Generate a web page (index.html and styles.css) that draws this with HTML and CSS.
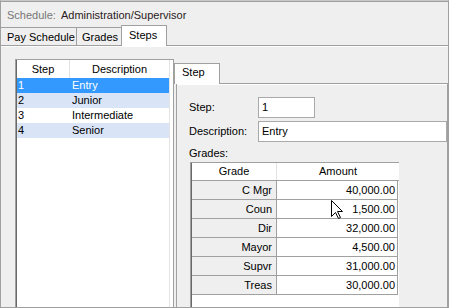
FILE: index.html
```html
<!DOCTYPE html>
<html>
<head>
<meta charset="utf-8">
<link rel="stylesheet" href="styles.css">
</head>
<body>
<div class="win">
  <div class="title"><span class="lbl">Schedule:</span><span class="val">Administration/Supervisor</span></div>
  <div class="tabs">
    <div class="tab tab-pay">Pay Schedule</div>
    <div class="tab tab-grades">Grades</div>
    <div class="tab tab-active">Steps</div>
  </div>
  <div class="page">
    <div class="list">
      <div class="ltable">
        <div class="lrow lhead"><div class="lc1">Step</div><div class="lc2">Description</div></div>
        <div class="lrow sel"><div class="lc1">1</div><div class="lc2">Entry</div></div>
        <div class="lrow alt"><div class="lc1">2</div><div class="lc2">Junior</div></div>
        <div class="lrow"><div class="lc1">3</div><div class="lc2">Intermediate</div></div>
        <div class="lrow alt"><div class="lc1">4</div><div class="lc2">Senior</div></div>
      </div>
    </div>
    <div class="detail">
      <div class="subtabs"><div class="subtab">Step</div></div>
      <div class="subbody">
        <div class="frow"><span class="flbl">Step:</span><div class="inp inp-step">1</div></div>
        <div class="frow"><span class="flbl">Description:</span><div class="inp inp-desc">Entry</div></div>
        <div class="glbl">Grades:</div>
        <div class="grid">
          <div class="ghead"><div class="gh1">Grade</div><div class="gh2">Amount</div></div>
          <div class="grow"><div class="gc1">C Mgr</div><div class="gc2">40,000.00</div></div>
          <div class="grow"><div class="gc1">Coun</div><div class="gc2">1,500.00</div></div>
          <div class="grow"><div class="gc1">Dir</div><div class="gc2">32,000.00</div></div>
          <div class="grow"><div class="gc1">Mayor</div><div class="gc2">4,500.00</div></div>
          <div class="grow"><div class="gc1">Supvr</div><div class="gc2">31,000.00</div></div>
          <div class="grow"><div class="gc1">Treas</div><div class="gc2">30,000.00</div></div>
        </div>
      </div>
    </div>
  </div>
  <svg class="cursor" width="13" height="20" viewBox="0 0 13 20"><path d="M0.5 0.5 L0.5 16.5 L4.5 12.5 L7.5 18.5 L9.5 17.5 L6.5 11.5 L11.5 11.5 Z" fill="#fff" stroke="#000" stroke-width="1" stroke-linejoin="miter"/></svg>
</div>
</body>
</html>
```

FILE: styles.css
```css
body {
  margin: 0;
  font-family: "Liberation Sans", Arial, sans-serif;
  font-size: 11px;
  line-height: 13px;
  color: #000;
  background: #fff;
}

.win {
  position: relative;
  width: 449px;
  height: 308px;
  box-sizing: border-box;
  border: 1px solid #a0a0a0;
  border-top-color: #c8c8c8;
  background: #efefef;
  display: flex;
  flex-direction: column;
  overflow: hidden;
}

.title {
  height: 24px;
  box-sizing: border-box;
  border-top: 1px solid #a0a0a0;
  padding: 3px 0 0 6px;
  display: flex;
  align-items: center;
  flex: none;
}

.lbl {
  width: 54px;
  color: #767676;
}

.val {
  color: #2a1a1a;
}

.tabs {
  height: 21px;
  box-sizing: border-box;
  border-bottom: 1px solid #a0a0a0;
  display: flex;
  align-items: flex-end;
  flex: none;
}

.tab {
  height: 18px;
  box-sizing: border-box;
  border-top: 1px solid #a0a0a0;
  border-left: 1px solid #a0a0a0;
  padding: 3px 0 0 5px;
  white-space: nowrap;
}

.tab-pay {
  width: 75px;
  border-left: none;
  padding-left: 6px;
}

.tab-grades {
  width: 45px;
}

.tab-active {
  width: 46px;
  height: 21px;
  margin-bottom: -1px;
  border-right: 1px solid #a0a0a0;
  background: #fff;
  padding: 3px 0 0 7px;
  position: relative;
  z-index: 1;
}

.page {
  flex: 1;
  min-height: 0;
  border-top: 1px solid #fff;
  padding: 12px 0 0 14px;
  display: flex;
  align-items: flex-start;
  overflow: hidden;
}

.list {
  flex: none;
  width: 159px;
  height: 300px;
  box-sizing: border-box;
  border: 1px solid #a0a0a0;
  border-bottom: none;
  box-shadow: inset 1px 0 #696969;
  background: #fff;
  padding-left: 1px;
}

.ltable {
  width: 153px;
  height: 100%;
  box-sizing: border-box;
  border-right: 1px solid #e3e3e3;
}

.lrow {
  display: flex;
  height: 15px;
  line-height: 15px;
}

.lc1 {
  width: 53px;
  box-sizing: border-box;
  padding-left: 1px;
}

.lc2 {
  flex: 1;
  padding-left: 2px;
}

.lhead {
  height: 18px;
  line-height: 18px;
}

.lhead .lc1 {
  border-right: 1px solid #e3e3e3;
  text-align: center;
  padding-left: 0;
}

.lhead .lc2 {
  text-align: center;
  padding-left: 0;
}

.lrow.sel {
  background: #3399ff;
  color: #fff;
}

.lrow.alt {
  background: #d9e5f7;
}

.detail {
  flex: none;
  width: 274px;
  margin-top: 4px;
  display: flex;
  flex-direction: column;
}

.subtabs {
  height: 20px;
  display: flex;
  align-items: flex-end;
}

.subtab {
  width: 46px;
  height: 21px;
  box-sizing: border-box;
  border: 1px solid #a0a0a0;
  border-bottom: none;
  background: #fff;
  margin-bottom: -1px;
  padding: 2px 0 0 7px;
  position: relative;
  z-index: 1;
}

.subbody {
  margin-left: 2px;
  height: 400px;
  border: 1px solid #a0a0a0;
  border-bottom: none;
  box-shadow: inset 0 1px #fff;
  padding: 13px 0 0 12px;
}

.frow {
  display: flex;
  align-items: center;
  height: 21px;
  margin-bottom: 3px;
}

.flbl {
  width: 69px;
}

.inp {
  height: 21px;
  box-sizing: border-box;
  border: 1px solid #a9a9a9;
  background: #fff;
  padding-left: 3px;
  line-height: 19px;
}

.inp-step {
  width: 57px;
}

.inp-desc {
  width: 189px;
}

.glbl {
  margin-top: 5px;
  margin-bottom: 2px;
}

.grid {
  margin-left: 1px;
  width: 209px;
  height: 200px;
  box-sizing: border-box;
  border-top: 1px solid #a0a0a0;
  border-left: 1px solid #a0a0a0;
  box-shadow: inset 1px 0 #696969;
  background: #fff;
  padding-left: 1px;
}

.ghead {
  display: flex;
  height: 18px;
  box-sizing: border-box;
  border-bottom: 1px solid #a0a0a0;
  line-height: 17px;
}

.gh1 {
  width: 85px;
  box-sizing: border-box;
  border-right: 1px solid #e3e3e3;
  text-align: center;
}

.gh2 {
  flex: 1;
  text-align: center;
}

.grow {
  display: flex;
  width: 206px;
  height: 19px;
  box-sizing: border-box;
  border-bottom: 1px solid #a0a0a0;
  line-height: 18px;
}

.gc1 {
  width: 85px;
  box-sizing: border-box;
  border-right: 1px solid #a0a0a0;
  background: #efefef;
  text-align: right;
  padding-right: 4px;
}

.gc2 {
  width: 121px;
  box-sizing: border-box;
  border-right: 1px solid #a0a0a0;
  text-align: right;
  padding-right: 2px;
}

.cursor {
  position: absolute;
  left: 330px;
  top: 199px;
}
```
